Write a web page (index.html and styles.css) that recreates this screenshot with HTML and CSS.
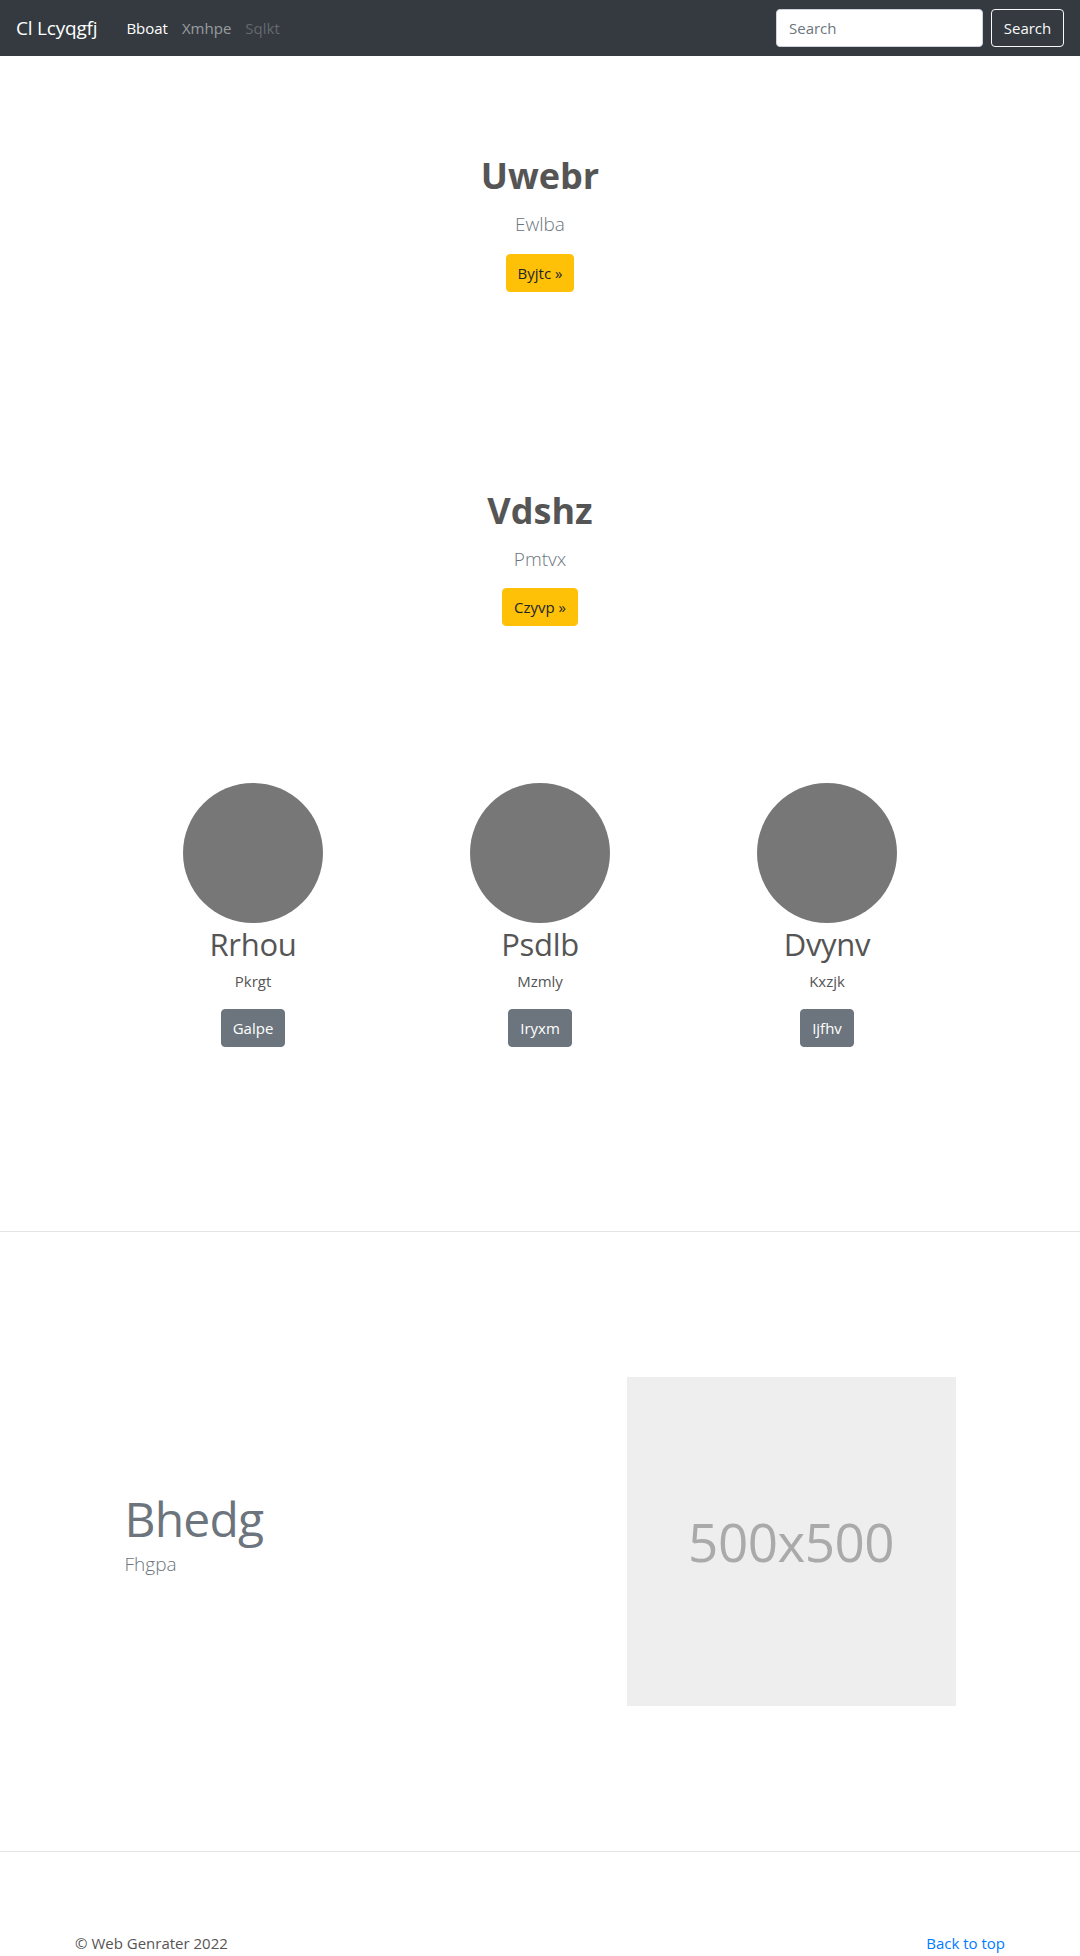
FILE: index.html
```html
<!DOCTYPE html>
<html lang="en">
<head>
<meta charset="utf-8">
<title>Cl Lcyqgfj</title>
<link rel="stylesheet" href="styles.css">
</head>
<body>
<nav class="navbar">
  <a class="brand" href="#">Cl Lcyqgfj</a>
  <ul class="nav-links">
    <li><a class="nav-link active" href="#">Bboat</a></li>
    <li><a class="nav-link" href="#">Xmhpe</a></li>
    <li><a class="nav-link disabled" href="#">Sqlkt</a></li>
  </ul>
  <form class="search-form">
    <input class="search-input" type="text" placeholder="Search">
    <button class="btn btn-outline" type="button">Search</button>
  </form>
</nav>

<main>
  <section class="hero">
    <h1 class="hero-title">Uwebr</h1>
    <p class="lead">Ewlba</p>
    <a class="btn btn-warning" href="#">Byjtc »</a>
  </section>

  <section class="hero">
    <h1 class="hero-title">Vdshz</h1>
    <p class="lead">Pmtvx</p>
    <a class="btn btn-warning" href="#">Czyvp »</a>
  </section>

  <section class="marketing">
    <div class="marketing-row">
      <div class="member">
        <div class="avatar"></div>
        <h2 class="member-name">Rrhou</h2>
        <p class="member-text">Pkrgt</p>
        <a class="btn btn-secondary" href="#">Galpe</a>
      </div>
      <div class="member">
        <div class="avatar"></div>
        <h2 class="member-name">Psdlb</h2>
        <p class="member-text">Mzmly</p>
        <a class="btn btn-secondary" href="#">Iryxm</a>
      </div>
      <div class="member">
        <div class="avatar"></div>
        <h2 class="member-name">Dvynv</h2>
        <p class="member-text">Kxzjk</p>
        <a class="btn btn-secondary" href="#">Ijfhv</a>
      </div>
    </div>
  </section>

  <hr class="divider">

  <section class="featurette">
    <div class="featurette-text">
      <h2 class="featurette-heading">Bhedg</h2>
      <p class="featurette-lead">Fhgpa</p>
    </div>
    <div class="featurette-media">
      <div class="placeholder">500x500</div>
    </div>
  </section>

  <hr class="divider">
</main>

<footer class="footer">
  <p class="copyright">© Web Genrater 2022</p>
  <a class="back-top" href="#">Back to top</a>
</footer>
</body>
</html>
```

FILE: styles.css
```css
* {
  box-sizing: border-box;
}

html, body {
  margin: 0;
  padding: 0;
}

body {
  font-family: "Open Sans", "Noto Sans", sans-serif;
  font-size: 15px;
  line-height: 1.5;
  color: #212529;
  background: #fff;
}

a {
  text-decoration: none;
}

/* Navbar */
.navbar {
  height: 56px;
  background: #343a40;
  display: flex;
  align-items: center;
  padding: 0 16px;
}

.brand {
  color: #fff;
  font-size: 19px;
  line-height: 1.5;
  margin-right: 22px;
  letter-spacing: -0.2px;
}

.nav-links {
  display: flex;
  list-style: none;
  margin: 0;
  padding: 0;
  flex: 1;
}

.nav-link {
  display: block;
  padding: 8px 7px;
  font-size: 15px;
  color: rgba(255, 255, 255, 0.5);
}

.nav-link.active {
  color: #fff;
  font-weight: 500;
}

.nav-link.disabled {
  color: rgba(255, 255, 255, 0.25);
}

.search-form {
  display: flex;
  align-items: center;
  gap: 8px;
}

.search-input {
  width: 207px;
  height: 38px;
  padding: 6px 12px;
  border: 1px solid #ced4da;
  border-radius: 4px;
  font-family: inherit;
  font-size: 15px;
  color: #495057;
  background: #fff;
}

.search-input::placeholder {
  color: #6c757d;
}

/* Buttons */
.btn {
  display: inline-block;
  height: 38px;
  padding: 0 11px;
  line-height: 36px;
  font-family: inherit;
  font-size: 15px;
  border: 1px solid transparent;
  border-radius: 4px;
  text-align: center;
  cursor: pointer;
}

.btn-outline {
  width: 73px;
  padding: 0;
  color: #f8f9fa;
  background: transparent;
  border-color: #f8f9fa;
}

.btn-warning {
  color: #212529;
  background: #ffc107;
  border-color: #ffc107;
}

.btn-secondary {
  color: #fff;
  background: #6c757d;
  border-color: #6c757d;
}

/* Hero */
.hero {
  text-align: center;
  padding: 98px 0 99px;
}

.hero-title {
  margin: 0 0 13px;
  font-size: 36px;
  line-height: 1.2;
  font-weight: 700;
  color: #555;
  letter-spacing: 0;
}

.lead {
  margin: 0 0 15px;
  font-size: 19px;
  font-weight: 300;
  color: #6c757d;
}

/* Marketing */
.marketing {
  padding: 58px 0 184px;
}

.marketing-row {
  width: 861px;
  margin: 0 auto;
  display: grid;
  grid-template-columns: repeat(3, 1fr);
}

.member {
  display: flex;
  flex-direction: column;
  align-items: center;
  text-align: center;
}

.avatar {
  width: 140px;
  height: 140px;
  margin-bottom: 3px;
  border-radius: 50%;
  background: #777;
}

.member-name {
  margin: 0 0 6px;
  font-size: 31px;
  line-height: 1.2;
  font-weight: 400;
  color: #555;
  letter-spacing: -0.3px;
}

.member-text {
  margin: 0 0 17px;
  font-size: 15px;
  color: #555;
}

/* Dividers */
.divider {
  margin: 0;
  border: 0;
  border-top: 1px solid #e5e5e5;
}

/* Featurette */
.featurette {
  width: 861px;
  margin: 0 auto;
  padding: 145px 0 145px;
  display: grid;
  grid-template-columns: 7fr 5fr;
  align-items: center;
}

.featurette-text {
  padding: 0 15px 10px;
}

.featurette-heading {
  margin: 0 0 7px;
  font-size: 48px;
  line-height: 1;
  font-weight: 400;
  color: #6c757d;
  letter-spacing: -0.8px;
}

.featurette-lead {
  margin: 0;
  font-size: 19px;
  font-weight: 300;
  color: #6c757d;
}

.featurette-media {
  padding: 0 15px;
}

.placeholder {
  width: 100%;
  aspect-ratio: 1 / 1;
  background: #eee;
  color: #aaa;
  display: flex;
  align-items: center;
  justify-content: center;
  font-size: 53px;
  letter-spacing: -0.5px;
}

/* Footer */
.footer {
  width: 960px;
  margin: 0 auto;
  padding: 80px 15px 20px;
  display: flex;
  justify-content: space-between;
  align-items: center;
}

.copyright {
  margin: 0;
  color: #555;
  font-size: 15px;
}

.back-top {
  color: #007bff;
  font-size: 15px;
}
```
